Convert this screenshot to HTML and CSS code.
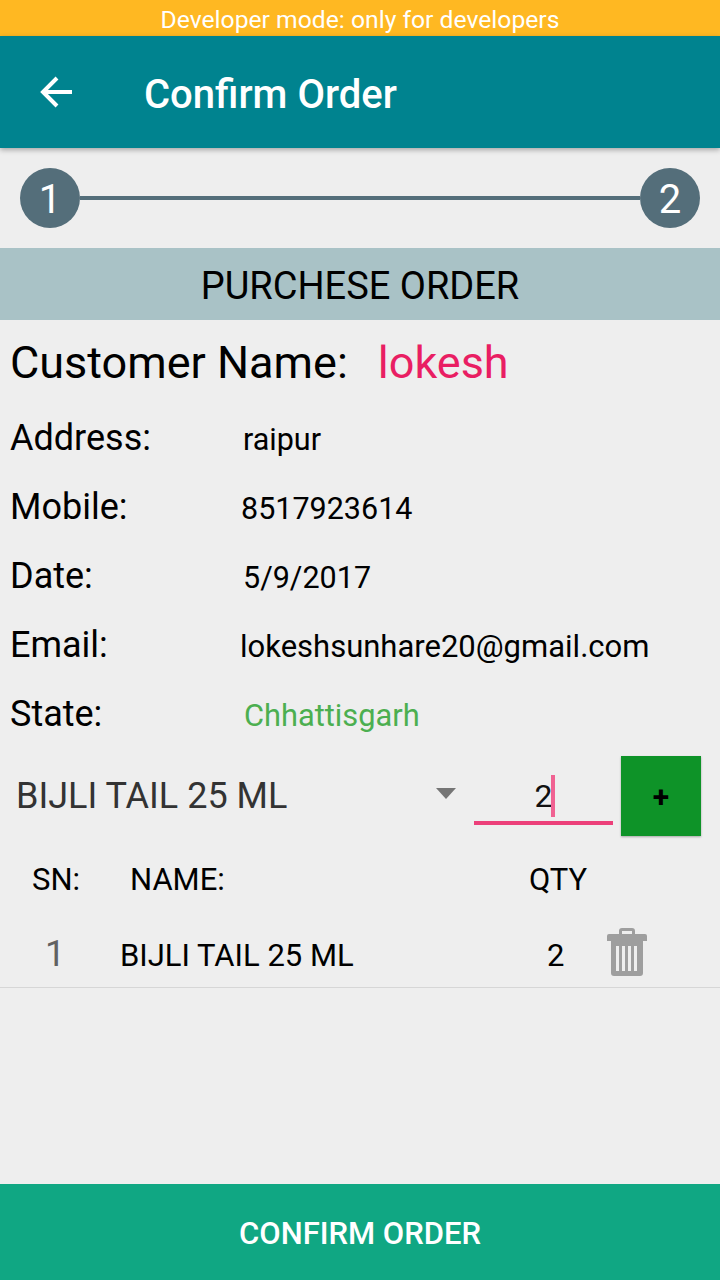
FILE: index.html
```html
<!DOCTYPE html>
<html lang="en">
<head>
<meta charset="utf-8">
<title>Confirm Order</title>
<link rel="stylesheet" href="styles.css">
</head>
<body>
<div class="app">
  <div class="devbar">Developer mode: only for developers</div>
  <header class="appbar">
    <svg class="back" width="48" height="48" viewBox="0 0 48 48"><path d="M40 24H12M25 10 11 24l14 14" fill="none" stroke="#fff" stroke-width="4"/></svg>
    <h1 class="title">Confirm Order</h1>
  </header>
  <div class="stepper">
    <div class="step">1</div>
    <div class="step-line"></div>
    <div class="step">2</div>
  </div>
  <div class="banner">PURCHESE ORDER</div>
  <div class="customer"><span class="customer-label">Customer Name:</span><span class="customer-name">lokesh</span></div>
  <div class="info">
    <div class="info-row"><span class="info-label">Address:</span><span class="info-value v-address">raipur</span></div>
    <div class="info-row"><span class="info-label">Mobile:</span><span class="info-value v-mobile">8517923614</span></div>
    <div class="info-row"><span class="info-label">Date:</span><span class="info-value v-date">5/9/2017</span></div>
    <div class="info-row"><span class="info-label">Email:</span><span class="info-value v-email">lokeshsunhare20@gmail.com</span></div>
    <div class="info-row"><span class="info-label">State:</span><span class="info-value v-state">Chhattisgarh</span></div>
  </div>
  <div class="picker">
    <div class="spinner"><span class="spinner-text">BIJLI TAIL 25 ML</span><span class="caret"></span></div>
    <div class="qty-input"><span class="qty-value">2</span><span class="cursor"></span></div>
    <div class="add">+</div>
  </div>
  <div class="table-head">
    <span class="col-sn">SN:</span><span class="col-name">NAME:</span><span class="col-qty">QTY</span>
  </div>
  <div class="table-row">
    <span class="cell-sn">1</span><span class="cell-name">BIJLI TAIL 25 ML</span><span class="cell-qty">2</span>
    <svg class="trash" width="40" height="48" viewBox="0 0 40 48"><path fill="#9e9e9e" fill-rule="evenodd" d="M15 0h10a3 3 0 0 1 3 3v3h10a2 2 0 0 1 2 2v5H0V8a2 2 0 0 1 2-2h10V3a3 3 0 0 1 3-3Zm0 3v3h10V3ZM4 13h32v32a3 3 0 0 1-3 3H7a3 3 0 0 1-3-3ZM9 18v25h3V18Zm6 0v25h3V18Zm6 0v25h3V18Zm6 0v25h3V18Z"/></svg>
  </div>
  <div class="spacer"></div>
  <div class="confirm">CONFIRM ORDER</div>
</div>
</body>
</html>
```
FILE: styles.css
```css
* { box-sizing: border-box; }
html, body { margin: 0; padding: 0; }
body { font-family: Roboto, sans-serif; color: #000; background: #eeeeee; }
.app { width: 720px; height: 1280px; display: flex; flex-direction: column; overflow: hidden; background: #eeeeee; }

.devbar { height: 36px; flex: none; background: #ffb822; color: #fff; font-size: 24.7px; line-height: 40px; text-align: center; white-space: nowrap; }

.appbar { height: 112px; flex: none; background: #00838f; display: flex; align-items: center; padding-left: 32px; box-shadow: 0 2px 5px rgba(0,0,0,.3); position: relative; }
.back { flex: none; display: block; }
.title { margin: 6px 0 0 64px; font-size: 40px; font-weight: 500; color: #fff; line-height: 48px; }

.stepper { height: 100px; flex: none; display: flex; align-items: center; padding: 0 20px; }
.step { width: 60px; height: 60px; flex: none; border-radius: 50%; background: #546e7a; color: #fff; font-size: 40px; display: flex; align-items: center; justify-content: center; padding-top: 2px; }
.step-line { flex: 1; height: 4px; background: #546e7a; }

.banner { height: 72px; flex: none; background: #a9c2c6; font-size: 38px; line-height: 76px; text-align: center; }

.customer { height: 84px; flex: none; display: flex; align-items: center; padding-left: 10px; font-size: 45px; }
.customer-name { color: #e91e63; margin-left: 30px; }

.info { flex: none; display: flex; flex-direction: column; }
.info-row { height: 69px; display: flex; align-items: center; padding-left: 10px; }
.info-label { width: 230px; font-size: 36px; flex: none; padding-bottom: 2px; }
.info-value { font-size: 30.500px; padding-top: 2px; }
.v-address { margin-left: 3px; }
.v-mobile { margin-left: 1px; }
.v-date { margin-left: 3px; }
.v-email { font-size: 31px; }
.v-state { margin-left: 4px; color: #4caf50; font-size: 30.800px; }

.picker { height: 80px; flex: none; display: flex; align-items: center; margin-top: 7px; }
.spinner { width: 474px; flex: none; display: flex; align-items: center; padding-left: 16px; position: relative; height: 80px; }
.spinner-text { font-size: 36px; color: #333; }
.caret { position: absolute; left: 436px; top: 32px; width: 0; height: 0; border-left: 10px solid transparent; border-right: 10px solid transparent; border-top: 11px solid #757575; }
.qty-input { width: 139px; height: 69px; flex: none; border-bottom: 4px solid #ec407a; align-self: flex-start; display: flex; justify-content: center; align-items: center; position: relative; font-size: 32px; }
.qty-value { padding-top: 14px; color: #111; }
.cursor { position: absolute; left: 77px; top: 19px; width: 4px; height: 42px; background: #f06292; }
.add { width: 80px; height: 80px; flex: none; margin-left: 8px; background: #0e9328; display: flex; align-items: center; justify-content: center; font-size: 30px; font-weight: 700; box-shadow: 0 1px 2px rgba(0,0,0,.3); }

.table-head { height: 84px; flex: none; display: flex; align-items: center; font-size: 31px; position: relative; padding-left: 32px; padding-top: 2px; }
.col-sn { width: 98px; }
.col-name { width: 399px; }

.table-row { height: 68px; flex: none; display: flex; align-items: center; border-bottom: 1px solid #d6d6d6; padding-left: 46px; font-size: 31px; }
.cell-sn { width: 74px; font-size: 36px; color: #616161; padding-right: 2px; margin-left: -1px; margin-right: 1px; }
.cell-name { width: 427px; padding-top: 4px; }
.cell-qty { width: 60px; padding-top: 4px; }
.trash { flex: none; display: block; margin-bottom: 4px; }

.spacer { flex: 1; }
.confirm { height: 96px; flex: none; background: #10a783; color: #fff; font-size: 31px; font-weight: 500; display: flex; align-items: center; justify-content: center; padding-top: 2px; }
```
